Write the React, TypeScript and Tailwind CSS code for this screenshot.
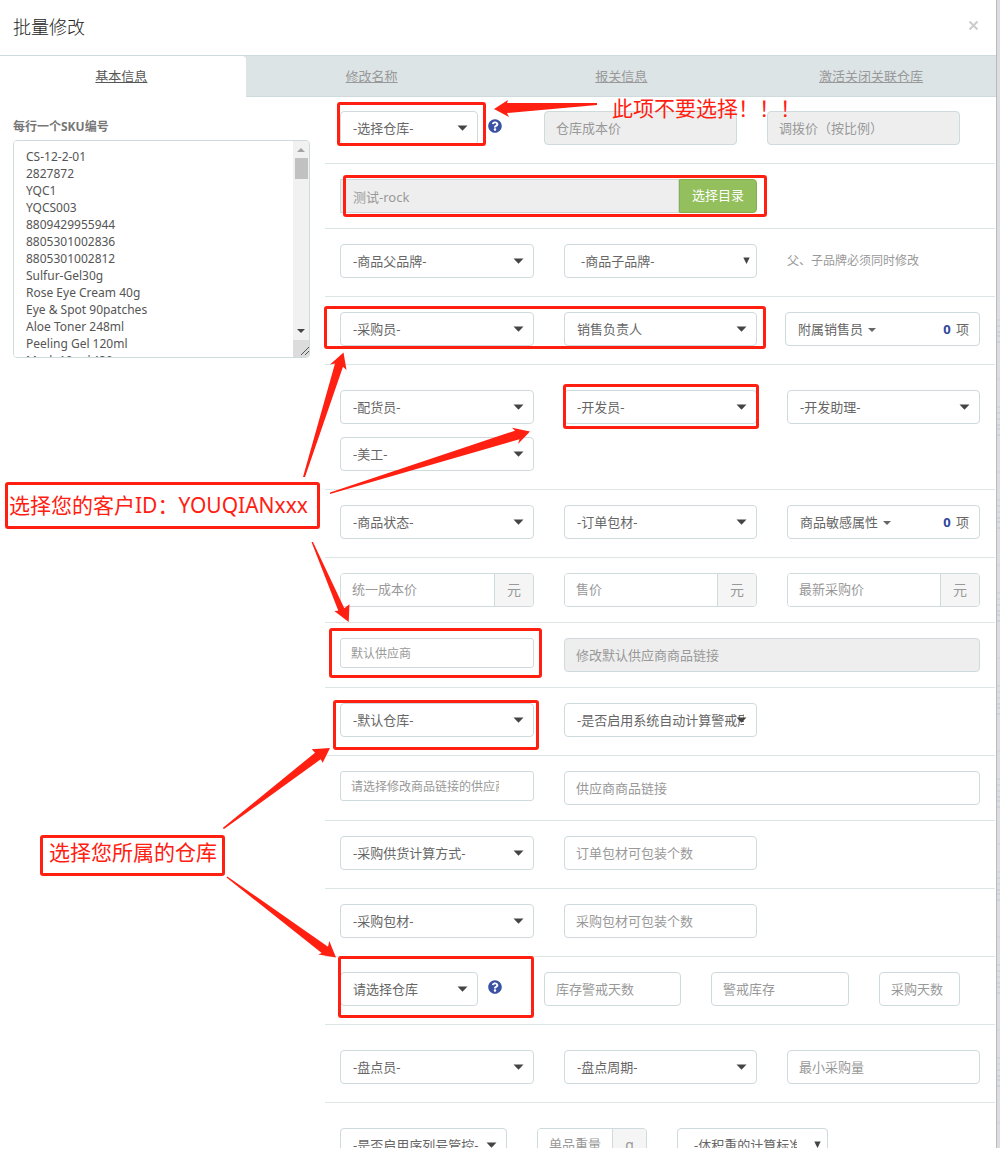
import type { ReactNode } from 'react';
import { FaQuestionCircle } from 'react-icons/fa';

const control =
  'block w-full h-[34px] rounded border border-[#cfdadd] bg-white text-[13px] text-[#666]';

function Dropdown({ label }: { label: string }) {
  return (
    <div className="relative min-w-0 flex-1">
      <select aria-label={label} className={`${control} appearance-none pt-px pr-3 pl-3`}>
        <option>{label}</option>
      </select>
      <svg className="pointer-events-none absolute right-[10px] top-[14px] h-[6px] w-[11px]" viewBox="0 0 11 6">
        <path d="M0.5 0.5h10L5.5 5.8z" fill="#444" />
      </svg>
    </div>
  );
}

function NativeDropdown({ label }: { label: string }) {
  return (
    <div className="relative min-w-0 flex-1">
      <select aria-label={label} className={`${control} appearance-none pt-0.5 pl-4 pr-[30px] text-[#555]`}>
        <option>{label}</option>
      </select>
      <svg className="pointer-events-none absolute right-[7px] top-[13px] h-[7px] w-[7px]" viewBox="0 0 7 7">
        <path d="M0.3 0.5h6.4L3.5 7z" fill="#444" />
      </svg>
    </div>
  );
}

function Field({ label, disabled = false }: { label: string; disabled?: boolean }) {
  return (
    <input
      type="text"
      aria-label={label}
      placeholder={label}
      disabled={disabled}
      className={`${control} min-w-0 px-[11px] placeholder:text-[#999] disabled:bg-[#eee]`}
    />
  );
}

function SmallField({ label }: { label: string }) {
  return (
    <input
      type="text"
      aria-label={label}
      placeholder={label}
      className="block h-[30px] w-full min-w-0 rounded-[3px] border border-[#cfdadd] bg-white pr-[34px] pl-2.5 text-xs placeholder:text-[#999]"
    />
  );
}

function UnitField({ label, unit, unitWidth = 'w-[39px]' }: { label: string; unit: string; unitWidth?: string }) {
  return (
    <div className="flex h-[34px] overflow-hidden rounded border border-[#cfdadd]">
      <input
        type="text"
        aria-label={label}
        placeholder={label}
        className="min-w-0 flex-1 bg-white px-[11px] text-[13px] placeholder:text-[#999]"
      />
      <span
        className={`${unitWidth} flex shrink-0 items-center justify-center border-l border-[#cfdadd] bg-[#f5f5f5] text-sm text-[#999]`}
      >
        {unit}
      </span>
    </div>
  );
}

function MultiPick({ label }: { label: string }) {
  return (
    <button type="button" className={`${control} flex items-center pt-px pr-2.5 pl-3 text-left`}>
      {label}
      <svg className="ml-[5px] h-1 w-2" viewBox="0 0 8 4">
        <path d="M0 0h8L4 4z" fill="#666" />
      </svg>
      <span className="ml-auto">
        <b className="mr-0.5 font-bold text-[#2f479c]">0</b> 项
      </span>
    </button>
  );
}

function Row({
  children,
  cols = 'grid-cols-[194fr_193fr_193fr]',
  pad = 'pt-[15px] pb-[18px]',
}: {
  children: ReactNode;
  cols?: string;
  pad?: string;
}) {
  return (
    <div className={`grid items-start gap-x-[30px] gap-y-[13px] border-b border-[#dee5e7] px-[15px] ${cols} ${pad}`}>
      {children}
    </div>
  );
}

function WarehousePick({ label }: { label: string }) {
  return (
    <div className="flex">
      <Dropdown label={label} />
      <button type="button" aria-label="帮助" className="mt-2 ml-2.5 w-[26px] self-start">
        <FaQuestionCircle className="size-[14px] text-[#3b51a3]" />
      </button>
    </div>
  );
}

const skus = [
  'CS-12-2-01',
  '2827872',
  'YQC1',
  'YQCS003',
  '8809429955944',
  '8805301002836',
  '8805301002812',
  'Sulfur-Gel30g',
  'Rose Eye Cream 40g',
  'Eye & Spot 90patches',
  'Aloe Toner 248ml',
  'Peeling Gel 120ml',
  'Mask 10pc*430',
].join('\n');

function SkuPanel() {
  return (
    <section className="w-[325px] shrink-0 pt-[22px] pr-[15px] pl-[13px]">
      <label htmlFor="skus" className="block text-xs leading-[18px] font-bold text-[#777]">
        每行一个SKU编号
      </label>
      <div className="mt-1 flex h-[218px] overflow-hidden rounded border border-[#cfdadd]">
        <textarea
          id="skus"
          defaultValue={skus}
          className="min-w-0 flex-1 resize-none overflow-hidden bg-white pt-[7px] pl-3 text-xs leading-[17px] text-[#555]"
        />
        <svg className="h-[216px] w-[16px] shrink-0" viewBox="0 0 16 216">
          <rect width="16" height="216" fill="#f1f1f1" />
          <path d="M4 11h8L8 7z" fill="#a3a3a3" />
          <rect x="2" y="17" width="13" height="21" fill="#c1c1c1" />
          <path d="M4 188h8l-4 4z" fill="#444" />
          <rect y="199" width="16" height="17" fill="#dcdcdc" />
          <path d="M8 214l8-8M12 214l4-4" stroke="#555" />
        </svg>
      </div>
    </section>
  );
}

function Tabs() {
  return (
    <nav className="-ml-[3px] grid h-[41px] grid-cols-4 border-b border-[#cfdadd] bg-[#dce4e6] text-center text-[13px] leading-[40px] text-[#999]">
      <a href="#basic" className="mr-px h-[41px] rounded-t bg-white text-[#555] underline">
        基本信息
      </a>
      <a href="#name" className="underline">修改名称</a>
      <a href="#customs" className="underline">报关信息</a>
      <a href="#stores" className="underline">激活关闭关联仓库</a>
    </nav>
  );
}

function Form() {
  return (
    <form className="min-w-0 flex-1">
      <Row cols="grid-cols-[174fr_193fr_193fr] pr-[35px]!">
        <WarehousePick label="-选择仓库-" />
        <Field label="仓库成本价" disabled />
        <Field label="调拨价（按比例）" disabled />
      </Row>
      <Row pad="py-[15px]">
        <div className="col-span-2 flex">
          <input
            type="text"
            aria-label="目录"
            defaultValue="测试-rock"
            disabled
            className="h-[34px] min-w-0 flex-1 border border-[#cfdadd] bg-[#eee] px-3 text-[13px] text-[#999]"
          />
          <button
            type="button"
            className="h-[34px] w-[78px] rounded-r border border-[#83af4c] bg-[#93c05c] text-[13px] text-white"
          >
            选择目录
          </button>
        </div>
      </Row>
      <Row>
        <Dropdown label="-商品父品牌-" />
        <NativeDropdown label="-商品子品牌-" />
        <p className="text-xs leading-[33px] text-[#999]">父、子品牌必须同时修改</p>
      </Row>
      <Row>
        <Dropdown label="-采购员-" />
        <Dropdown label="销售负责人" />
        <div className="-ml-0.5">
          <MultiPick label="附属销售员" />
        </div>
      </Row>
      <Row pad="pt-[25px] pb-[18px]">
        <Dropdown label="-配货员-" />
        <Dropdown label="-开发员-" />
        <Dropdown label="-开发助理-" />
        <Dropdown label="-美工-" />
      </Row>
      <Row>
        <Dropdown label="-商品状态-" />
        <Dropdown label="-订单包材-" />
        <MultiPick label="商品敏感属性" />
      </Row>
      <Row pad="py-[15px]">
        <UnitField label="统一成本价" unit="元" />
        <UnitField label="售价" unit="元" />
        <UnitField label="最新采购价" unit="元" />
      </Row>
      <Row pad="py-[15px]">
        <SmallField label="默认供应商" />
        <div className="col-span-2">
          <Field label="修改默认供应商商品链接" disabled />
        </div>
      </Row>
      <Row>
        <Dropdown label="-默认仓库-" />
        <Dropdown label="-是否启用系统自动计算警戒库存-" />
      </Row>
      <Row pad="py-[15px]">
        <SmallField label="请选择修改商品链接的供应商" />
        <div className="col-span-2">
          <Field label="供应商商品链接" />
        </div>
      </Row>
      <Row>
        <Dropdown label="-采购供货计算方式-" />
        <Field label="订单包材可包装个数" />
      </Row>
      <Row>
        <Dropdown label="-采购包材-" />
        <Field label="采购包材可包装个数" />
      </Row>
      <Row cols="grid-cols-[174fr_137fr_138fr_81fr] pr-[35px]!">
        <WarehousePick label="请选择仓库" />
        <Field label="库存警戒天数" />
        <Field label="警戒库存" />
        <Field label="采购天数" />
      </Row>
      <Row pad="pt-[25px] pb-[18px]">
        <Dropdown label="-盘点员-" />
        <Dropdown label="-盘点周期-" />
        <Field label="最小采购量" />
      </Row>
      <Row cols="grid-cols-[167fr_110fr_151fr_122fr]" pad="pt-[25px] pb-[18px]">
        <Dropdown label="-是否启用序列号管控-" />
        <UnitField label="单品重量" unit="g" unitWidth="w-[34px]" />
        <NativeDropdown label="-体积重的计算标准-" />
      </Row>
    </form>
  );
}

const frame = 'absolute rounded-[3px] border-3 border-[#ff2012]';

function Annotations() {
  return (
    <div className="pointer-events-none absolute inset-0 text-[21px] leading-[30px] whitespace-nowrap text-[#ff2012]">
      <div className={`${frame} top-[102px] left-[337px] h-[44px] w-[149px]`} />
      <div className={`${frame} top-[175px] left-[343px] h-[42px] w-[424px]`} />
      <div className={`${frame} top-[306px] left-[324px] h-[43px] w-[442px]`} />
      <div className={`${frame} top-[384px] left-[563px] h-[45px] w-[196px]`} />
      <div className={`${frame} top-[628px] left-[329px] h-[50px] w-[213px]`} />
      <div className={`${frame} top-[700px] left-[333px] h-[50px] w-[206px]`} />
      <div className={`${frame} top-[956px] left-[338px] h-[62px] w-[196px]`} />
      <p className={`${frame} top-[482px] left-[5px] h-[47px] w-[315px] pt-[5px] pl-px`}>
        选择您的客户ID：YOUQIANxxx
      </p>
      <p className={`${frame} top-[835px] left-[40px] flex h-[41px] w-[185px] items-end pl-1.5`}>
        <span className="mb-[6px]">选择您所属的仓库</span>
      </p>
      <p className="absolute top-[93px] left-[612px]">此项不要选择！！！</p>
      <svg className="absolute top-0 left-0 h-[1148px] w-[1000px]" viewBox="0 0 1000 1148" fill="#ff2012">
        <path d="M494 109L508 100L507 103L597 103V105L507 113L509 117z" />
        <path d="M343.5 352.5L330 364.5L335 363.5L303 477L305 477L343 366.7L346.5 370z" />
        <path d="M530 431.5L512 427.7L515 430.7L330 492.5V494L519.5 439.3L518 444z" />
        <path d="M311.5 542H313L344.3 608.3L349.5 604.3L348.7 622L334.3 611L338.3 610.7z" />
        <path d="M330 748L311.7 749.3L315 752.7L222.7 828L224 829L320.7 759.3L322.7 762.7z" />
        <path d="M336 957.5L329.3 941L328 946.7L227.3 876.5L226.5 877.5L321.7 953L318.3 954.5z" />
      </svg>
    </div>
  );
}

function Backdrop() {
  return (
    <svg className="h-full w-1 shrink-0" fill="none">
      <defs>
        <pattern id="rows" width="4" height="93" y="-26" patternUnits="userSpaceOnUse">
          <rect width="4" height="93" fill="#dcdde0" />
          <path d="M0 33h4" stroke="#d0d2d4" />
          <path d="M1 61h3M1 67h3M1 73h3" stroke="#c8cecf" />
          <path d="M1 79h3M1 83h3M1 89h3" stroke="#bcc6d8" />
        </pattern>
      </defs>
      <rect width="4" height="100%" fill="#dcdde0" />
      <rect y="318" width="4" height="100%" fill="url(#rows)" />
      <path d="M0.5 0v1148" stroke="#b9bbbe" />
    </svg>
  );
}

export default function App() {
  return (
    <div className="h-screen overflow-hidden bg-white pb-[5px] font-['Noto_Sans','Noto_Sans_CJK_SC',sans-serif]">
      <div className="relative flex h-full overflow-hidden">
        <main role="dialog" aria-label="批量修改" className="min-w-0 flex-1 overflow-hidden bg-white">
          <header className="flex h-14 items-center justify-between border-b border-[#cfdadd] pr-[17px] pb-0.5 pl-[13px]">
            <h1 className="text-lg font-light text-[#222]">批量修改</h1>
            <button type="button" aria-label="关闭" className="mt-[-2px] text-[#ccc]">
              <svg className="size-[11px]" viewBox="0 0 11 11" stroke="currentColor" strokeWidth="2">
                <path d="M1.5 1.5l8 8M9.5 1.5l-8 8" />
              </svg>
            </button>
          </header>
          <Tabs />
          <div className="mt-[-1px] flex pr-px">
            <SkuPanel />
            <Form />
          </div>
        </main>
        <Backdrop />
        <Annotations />
      </div>
    </div>
  );
}
